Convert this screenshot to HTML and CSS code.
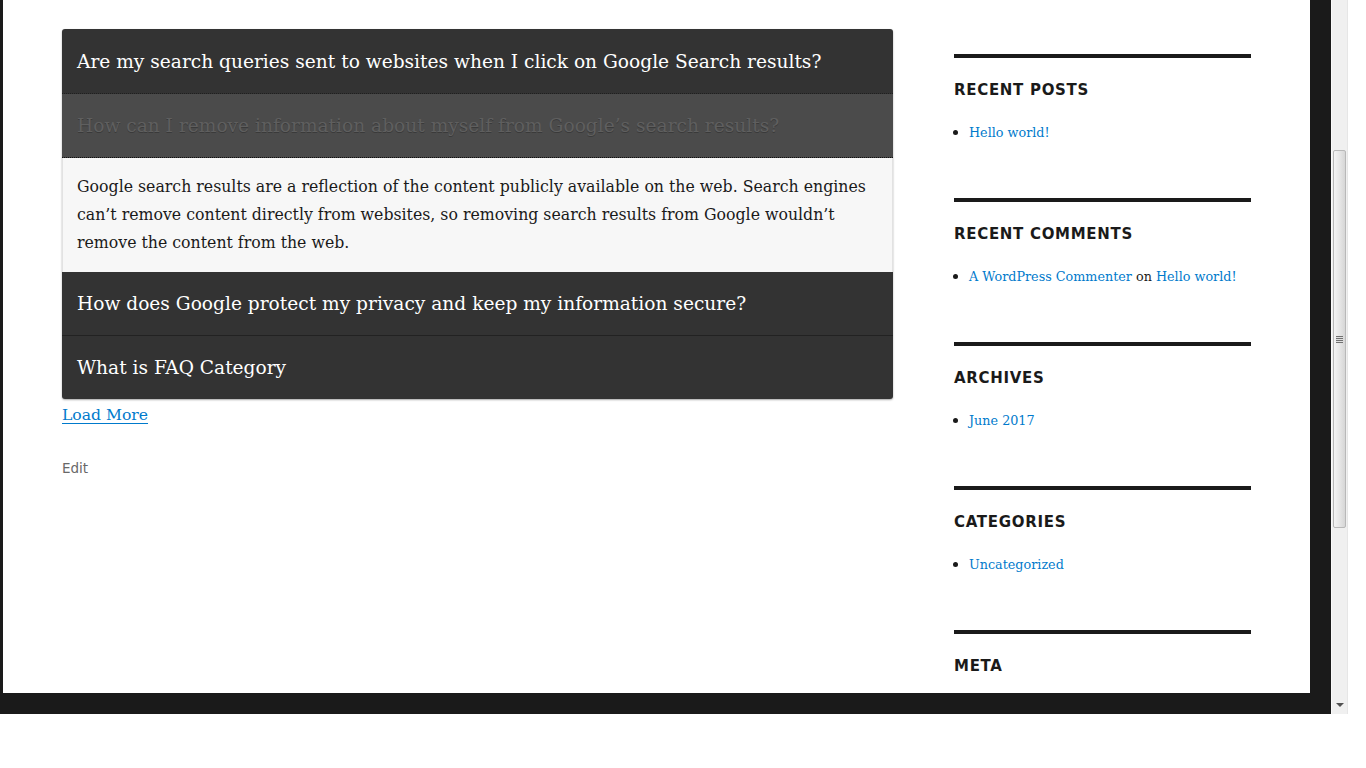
FILE: index.html
```html
<!DOCTYPE html>
<html lang="en">
<head>
<meta charset="utf-8">
<title>FAQ</title>
<link rel="stylesheet" href="styles.css">
</head>
<body>
<div class="viewport">
  <div class="frame">
    <div class="site">
      <main class="main">
        <div class="accordion">
          <div class="acc-head first">Are my search queries sent to websites when I click on Google Search results?</div>
          <div class="acc-head active">How can I remove information about myself from Google’s search results?</div>
          <div class="acc-body">Google search results are a reflection of the content publicly available on the web. Search engines can’t remove content directly from websites, so removing search results from Google wouldn’t remove the content from the web.</div>
          <div class="acc-head solid">How does Google protect my privacy and keep my information secure?</div>
          <div class="acc-head last">What is FAQ Category</div>
        </div>
        <a class="load-more" href="#">Load More</a>
        <div class="edit-link">Edit</div>
      </main>
      <aside class="sidebar">
        <section class="widget">
          <h2 class="widget-title">Recent Posts</h2>
          <ul class="widget-list"><li><a href="#">Hello world!</a></li></ul>
        </section>
        <section class="widget">
          <h2 class="widget-title">Recent Comments</h2>
          <ul class="widget-list"><li><a href="#">A WordPress Commenter</a> on <a href="#">Hello world!</a></li></ul>
        </section>
        <section class="widget">
          <h2 class="widget-title">Archives</h2>
          <ul class="widget-list"><li><a href="#">June 2017</a></li></ul>
        </section>
        <section class="widget">
          <h2 class="widget-title">Categories</h2>
          <ul class="widget-list"><li><a href="#">Uncategorized</a></li></ul>
        </section>
        <section class="widget">
          <h2 class="widget-title">Meta</h2>
        </section>
      </aside>
    </div>
  </div>
  <div class="scrollbar">
    <div class="sb-space-top"></div>
    <div class="sb-thumb"><span class="grip"></span></div>
    <div class="sb-space-bottom"></div>
    <div class="sb-arrow"></div>
  </div>
</div>
</body>
</html>
```

FILE: styles.css
```css
html, body {
  margin: 0;
  padding: 0;
  background: #ffffff;
}
body {
  font-family: "DejaVu Serif", serif;
  color: #1a1a1a;
}
.viewport {
  display: flex;
  width: 1348px;
  height: 714px;
  overflow: hidden;
}
.frame {
  flex: 1;
  background: #1a1a1a;
  padding: 0 21px 21px 3px;
  display: flex;
}
.site {
  flex: 1;
  background: #ffffff;
  display: flex;
  padding: 0 59px 0 59px;
  overflow: hidden;
}
.main {
  width: 831px;
  padding-top: 29px;
}
.accordion {
  background: #333333;
  border-radius: 3px;
  box-shadow: 0 1px 2px rgba(0, 0, 0, 0.35);
  overflow: hidden;
}
.acc-head {
  height: 63px;
  display: flex;
  align-items: center;
  padding: 0 15px;
  font-size: 18.6px;
  color: #ffffff;
  border-bottom: 1px dotted #1f1f1f;
  white-space: nowrap;
}
.acc-head.first {
  height: 64px;
}
.acc-head.active {
  background: #4b4b4b;
  color: #5f5f5f;
  text-shadow: 0 1px 0 #3a3a3a;
  border-bottom: 1px dotted #111111;
}
.acc-head.solid {
  border-bottom: 1px solid #222222;
}
.acc-head.last {
  border-bottom: 0;
}
.acc-body {
  background: #f7f7f7;
  padding: 15px;
  font-size: 15.75px;
  line-height: 28px;
  color: #1a1a1a;
  box-shadow: inset 1px 0 0 #e2e2e2, inset -1px 0 0 #e2e2e2;
}
.load-more {
  display: inline-block;
  margin-top: 5px;
  font-size: 15.6px;
  line-height: 22px;
  color: #007acc;
  text-decoration: underline;
  text-underline-offset: 3px;
}
.edit-link {
  margin-top: 34px;
  font-family: "DejaVu Sans", sans-serif;
  font-size: 13.5px;
  color: #686868;
}
.sidebar {
  width: 297px;
  margin-left: 61px;
  padding-top: 54px;
}
.widget {
  border-top: 4px solid #1a1a1a;
  padding-top: 21px;
  box-sizing: border-box;
  height: 144px;
}
.widget-title {
  margin: 0;
  font-family: "DejaVu Sans", sans-serif;
  font-weight: bold;
  font-size: 15px;
  line-height: 22px;
  letter-spacing: 0.7px;
  text-transform: uppercase;
  color: #1a1a1a;
}
.widget-list {
  margin: 19px 0 0 0;
  padding: 0 0 0 15px;
  font-size: 12.75px;
  line-height: 24px;
}
.widget-list li::marker {
  font-size: 15px;
}
.widget-list a {
  color: #007acc;
  text-decoration: none;
}
.scrollbar {
  width: 17px;
  height: 714px;
  background: #f0f0f0;
  box-shadow: inset 1px 0 0 #fafafa, inset -1px 0 0 #e6e6e6;
  display: flex;
  flex-direction: column;
  align-items: center;
}
.sb-space-top {
  height: 150px;
}
.sb-thumb {
  width: 13px;
  height: 378px;
  box-sizing: border-box;
  border: 1px solid #b8b8b8;
  border-radius: 2px;
  background: linear-gradient(to right, #f4f4f4 0%, #e8e8e8 45%, #d6d6d6 100%);
  display: flex;
  align-items: center;
  justify-content: center;
}
.grip {
  width: 7px;
  height: 7px;
  background: repeating-linear-gradient(to bottom, #707070 0 1px, #e0e0e0 1px 2px);
}
.sb-space-bottom {
  flex: 1;
}
.sb-arrow {
  width: 0;
  height: 0;
  border-left: 4px solid transparent;
  border-right: 4px solid transparent;
  border-top: 4px solid #505050;
  margin-bottom: 7px;
}
```
